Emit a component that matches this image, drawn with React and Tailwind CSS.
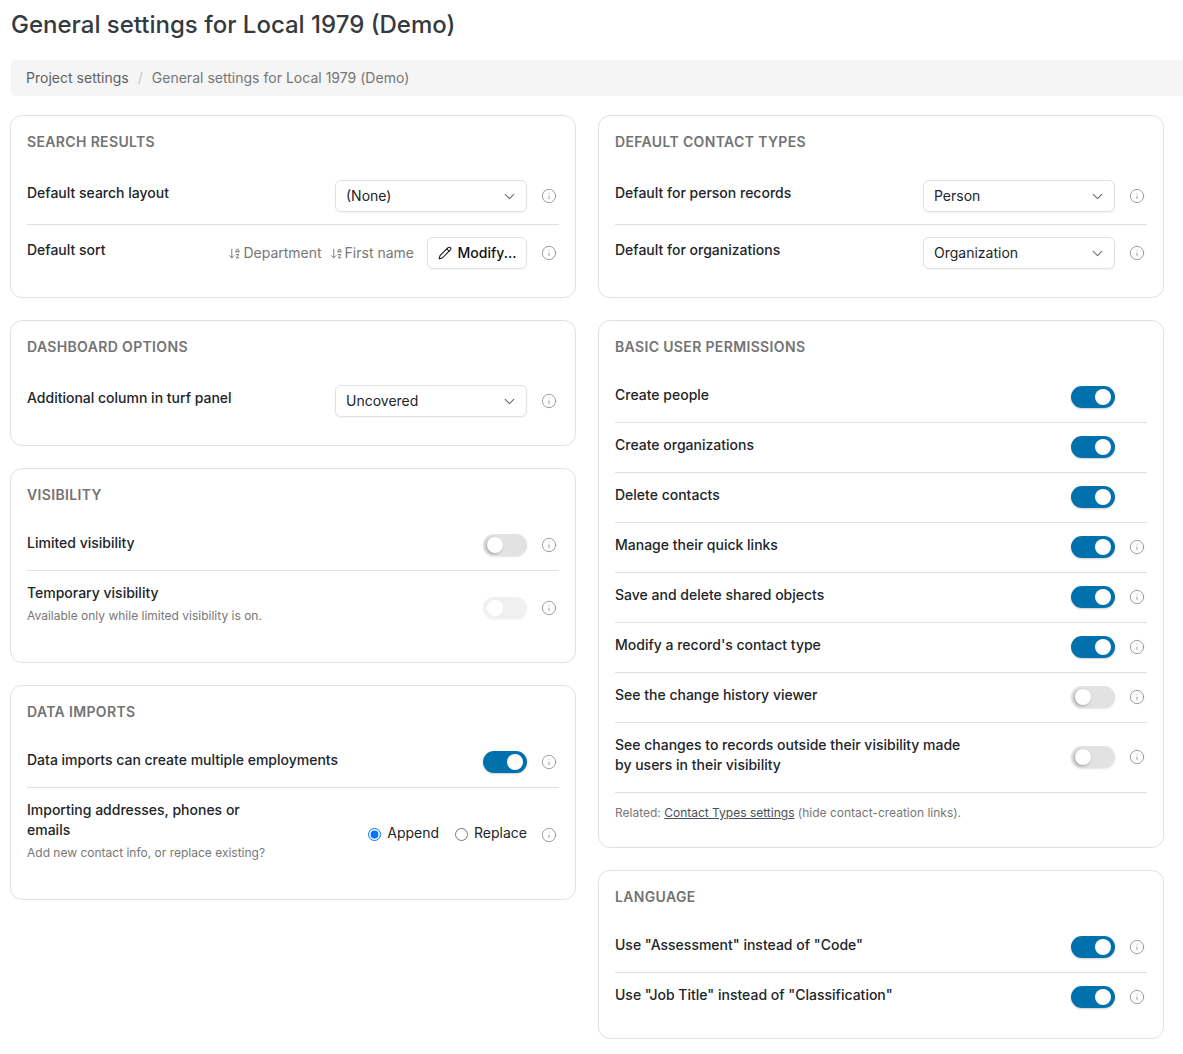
import React from "react";
import { ChevronDown, Info, Pencil, ArrowDownAZ } from "lucide-react";

function Card({ title, children, pb = "pb-4" }) {
  return (
    <section className={`rounded-xl border border-[#dee2e6] bg-white px-4 pt-4 ${pb}`}>
      <h2 className="text-[14px] leading-5 font-semibold tracking-[0.35px] text-[#737373] uppercase mb-4">{title}</h2>
      {children}
    </section>
  );
}

const InfoI = () => <Info className="w-4 h-4 text-[#8a8a8a] shrink-0 -translate-y-px" strokeWidth={1.25} />;

function Sel({ value }) {
  return (
    <div className="w-[192px] h-8 rounded-md border border-[#dee2e6] bg-white shadow-[0_1px_2px_rgba(0,0,0,0.05)] flex items-center justify-between pl-[10px] pr-2 text-[14px] text-[#212529]">
      <span className="mb-0.5">{value}</span>
      <ChevronDown className="w-[17px] h-[17px] text-[#6b6b6b]" strokeWidth={1.5} />
    </div>
  );
}

function Toggle({ on, faded }) {
  return (
    <div className={`w-11 h-[22px] mb-0.5 rounded-full relative ${on ? "bg-[#0071ad] shadow-[0_1px_2px_rgba(0,0,0,0.2)]" : faded ? "bg-[#f0f0f0] shadow-[0_1px_2px_rgba(0,0,0,0.04)]" : "bg-[#e2e2e2] shadow-[0_1px_2px_rgba(0,0,0,0.1)]"}`}>
      <div className={`absolute top-[3px] w-4 h-4 rounded-full bg-white ${on ? "right-1" : "left-1"} ${on || faded ? "" : "shadow-[-1px_1px_3px_rgba(0,0,0,0.3)]"}`} />
    </div>
  );
}

function Row({ label, sub, border = true, h, control, info = true, flatInfo }) {
  return (
    <div className={`flex items-center ${border ? "border-b border-[#dee2e6]" : ""} ${h}`}>
      <div className={`flex-1 min-w-0 ${sub ? "mb-[10px]" : "mb-[6px]"}`}>
        <div className="text-[14px] leading-5 font-medium text-[#212529]">{label}</div>
        {sub && <div className="text-[12px] leading-4 text-[#777] mt-[5px]">{sub}</div>}
      </div>
      {control}
      <div className={`w-8 flex justify-end pr-[2px] ${flatInfo ? "translate-y-px" : ""}`}>{info && <InfoI />}</div>
    </div>
  );
}

function Perm({ label, on = true, info = true, border = true, h = "h-[50px]" }) {
  return (
    <div className={`flex items-center ${h} ${border ? "border-b border-[#dee2e6]" : ""}`}>
      <div className="flex-1 text-[14px] leading-5 font-medium text-[#212529] mb-[6px]">{label}</div>
      <Toggle on={on} />
      <div className="w-8 flex justify-end pr-[2px]">{info && <InfoI />}</div>
    </div>
  );
}

const SortItem = ({ text }) => (
  <span className="flex items-center gap-[2px] text-[14px] text-[#777]">
    <ArrowDownAZ className="w-[13px] h-[13px]" strokeWidth={1.75} />
    <span className="mb-0.5">{text}</span>
  </span>
);

export default function App() {
  return (
    <div className="w-[1183px] h-[1054px] overflow-hidden bg-white font-['Inter','Liberation_Sans',sans-serif]">
      <h1 className="pl-[11px] pt-[10px] text-[24px] leading-[30px] font-[550] text-[#343a40]">General settings for Local 1979 (Demo)</h1>
      <nav className="ml-[11px] mt-[20px] h-9 bg-[#f5f5f5] rounded-l-sm flex items-center pl-[15px] pb-px text-[14px] tracking-[0.015px] text-[#757575]">
        <span className="text-[#616161]">Project settings</span>
        <span className="mx-[9px] text-[#c4c4c4]">/</span>
        <span>General settings for Local 1979 (Demo)</span>
      </nav>
      <div className="mt-[19px] ml-[10px] w-[1154px] grid grid-cols-[566px_566px] gap-x-[22px]">
        <div className="flex flex-col gap-[22px]">
          <Card title="Search results">
            <Row h="h-[57px]" flatInfo label="Default search layout" control={<Sel value="(None)" />} />
            <Row h="h-[56px]" flatInfo border={false} label="Default sort" control={
              <div className="flex items-center">
                <div className="flex gap-2 mr-[13px]"><SortItem text="Department" /><SortItem text="First name" /></div>
                <button className="h-8 w-[100px] rounded-md border border-[#dee2e6] shadow-[0_1px_2px_rgba(0,0,0,0.05)] flex items-center justify-center gap-1.5 text-[14px] font-medium text-[#111]">
                  <Pencil className="w-[14px] h-[14px]" strokeWidth={1.75} /><span className="mb-0.5">Modify...</span>
                </button>
              </div>} />
          </Card>
          <Card title="Dashboard options">
            <Row h="h-[56px]" flatInfo border={false} label="Additional column in turf panel" control={<Sel value="Uncovered" />} />
          </Card>
          <Card title="Visibility">
            <Row h="h-[50px]" label="Limited visibility" control={<Toggle />} />
            <Row h="h-[75px]" border={false} label="Temporary visibility" sub="Available only while limited visibility is on." control={<Toggle faded />} />
          </Card>
          <Card title="Data imports">
            <Row h="h-[50px]" label="Data imports can create multiple employments" control={<Toggle on />} />
            <Row h="h-[95px]" border={false} label={<span className="block w-[250px]">Importing addresses, phones or emails</span>} sub="Add new contact info, or replace existing?" control={
              <div className="flex items-center gap-4 text-[14px] text-[#212529] mb-0.5">
                <label className="flex items-center gap-[6px]"><input type="radio" name="m" defaultChecked className="w-[13px] h-[13px]" /><span className="mb-1">Append</span></label>
                <label className="flex items-center gap-[6px]"><input type="radio" name="m" className="w-[13px] h-[13px]" /><span className="mb-1">Replace</span></label>
              </div>} />
          </Card>
        </div>
        <div className="flex flex-col gap-[22px]">
          <Card title="Default contact types">
            <Row h="h-[57px]" flatInfo label="Default for person records" control={<Sel value="Person" />} />
            <Row h="h-[56px]" flatInfo border={false} label="Default for organizations" control={<Sel value="Organization" />} />
          </Card>
          <Card title="Basic user permissions" pb="pb-[26px]">
            <Perm label="Create people" info={false} />
            <Perm label="Create organizations" info={false} />
            <Perm label="Delete contacts" info={false} />
            <Perm label="Manage their quick links" />
            <Perm label="Save and delete shared objects" />
            <Perm label="Modify a record's contact type" />
            <Perm label="See the change history viewer" on={false} />
            <Perm h="h-[70px]" label={<span className="block w-[360px]">See changes to records outside their visibility made by users in their visibility</span>} on={false} />
            <div className="pt-[12px] text-[12px] leading-4 text-[#777]">Related: <span className="underline text-[#495057]">Contact Types settings</span> (hide contact-creation links).</div>
          </Card>
          <Card title="Language">
            <Perm label={'Use "Assessment" instead of "Code"'} />
            <Perm label={'Use "Job Title" instead of "Classification"'} border={false} h="h-[49px]" />
          </Card>
        </div>
      </div>
    </div>
  );
}
